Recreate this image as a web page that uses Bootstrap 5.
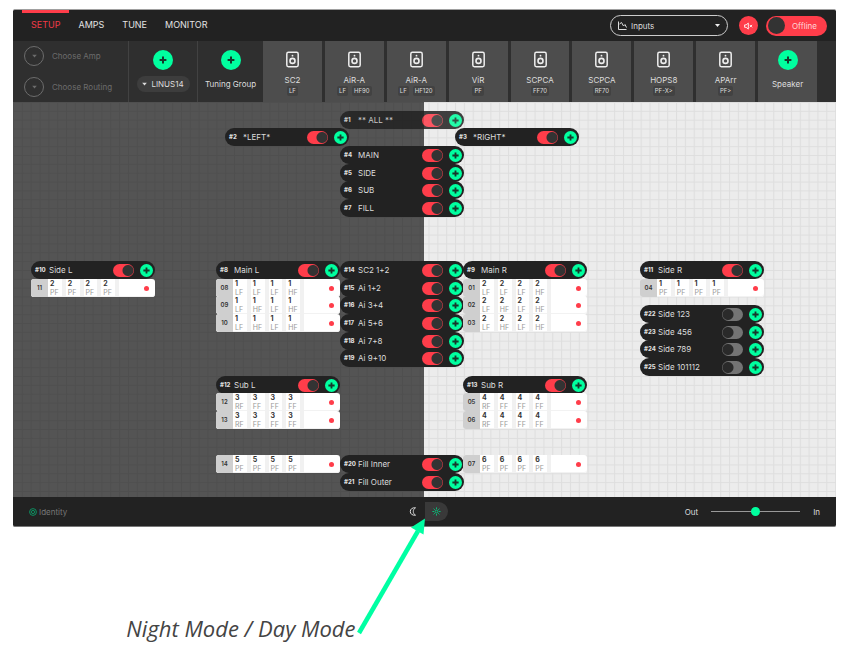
<!DOCTYPE html>
<html lang="en">
<head>
<meta charset="utf-8">
<meta name="viewport" content="width=device-width, initial-scale=1">
<title>Setup</title>
<link rel="stylesheet" href="https://cdn.jsdelivr.net/npm/bootstrap@5.3.0/dist/css/bootstrap.min.css">
<style>
  :root { --ink:#222; --panel:#2f2f2f; --tile:#4d4d4d; --red:#ff3d4a; --green:#00ff9f; }
  body { font-family: Inter, "Liberation Sans", sans-serif; font-size: 8px; line-height: 12px; background: #fff; color: #ddd; }
  button { font: inherit; color: inherit; border: 0; padding: 0; background: none; }
  .page { padding: 9px 23px 0 13px; }
  .app { background: var(--ink); border-top: 1px solid #a0a0a0; border-bottom: 1px solid #777; border-radius: 2px; }

  .topbar { height: 31px; padding-left: 9px; padding-right: 9px; }
  .tabs a { font-size: 9px; color: #e2e2e2; padding: 0 9px; border-top: 3px solid transparent; line-height: 24px; }
  .tabs a.active { color: #ef3a47; border-color: var(--red); }
  .source { width: 118px; height: 21px; margin-right: 11px; }
  .source select { font-size: 8px; line-height: 12px; color: #ddd; background: transparent; border: 1px solid #ccc; border-radius: 11px; padding: 0 20px; height: 21px; appearance: none; }
  .source svg { position: absolute; pointer-events: none; top: 0; left: 0; }
  .mute { width: 19px; height: 19px; background: var(--red); margin-right: 8px; }
  .offline { width: 61px; height: 20px; background: var(--red); color: #ffd5d8; padding-left: 2px; gap: 7px; }
  .offline input { appearance: none; width: 17px; height: 17px; border-radius: 50%; background: #333; margin: 0; }

  .library { height: 61px; background: var(--panel); }
  .choosers { width: 116px; padding-left: 11px; color: #6c6c6c; gap: 11px; border-right: 1px solid #424242; }
  .ring { width: 20px; height: 20px; border: 1px solid #6c6c6c; }
  .maker { border-right: 1px solid #424242; padding-top: 9px; }
  .maker.amp { width: 69px; }
  .maker.group { width: 65px; border: 0; }
  .add { width: 20px; height: 20px; background: var(--green); }
  .pill { height: 16px; width: 53px; background: #3d3d3d; border-radius: 8px; gap: 4px; margin-top: 6px; }
  .tiles { gap: 3px; padding-right: 19px; }
  .tile { background: var(--tile); flex: 1 1 0; min-width: 0; }
  .tile.new { padding-top: 9px; }
  .tile .glyph { margin-top: 10px; }
  .tile .title { line-height: 12px; margin-top: 6px; }
  .tag { font-size: 6px; line-height: 10px; background: #424242; border-radius: 2px; padding: 0 2px; }

  .stage { height: 395px; background: linear-gradient(90deg, #545454 50%, #ececec 50%); overflow: hidden; }
  .node { position: absolute; width: 124px; height: 18px; }
  .group-node { background: var(--ink); border-radius: 9px; padding-left: 4px; padding-right: 2px; }
  .group-node.faded { opacity: .85; }
  .num { font-size: 6px; font-weight: 800; width: 14px; }
  .knob { appearance: none; width: 21px; height: 13px; margin: 0 6px 0 0; border-radius: 7px; border: 0;
    background: radial-gradient(circle at 6px 50%, #2a2a2a 5px, #747474 6px); }
  .knob:checked { background: radial-gradient(circle at 15px 50%, #333 5px, var(--red) 6px); }
  .plus { width: 13px; height: 13px; background: var(--green); }
  .unit-node { background: #fff; border-radius: 3px; color: #333; overflow: hidden; box-shadow: inset 0 -1px #f2f2f2; }
  .unit-id { width: 17px; background: #cfcfcf; font-size: 6px; font-weight: 600; }
  .slots { width: 71px; }
  .slot { flex: 1 1 0; border-right: 4px solid #f1f1f1; padding-left: 2px; line-height: 9px; white-space: nowrap; }
  .slot b { font-size: 7px; font-weight: 700; }
  .slot span { font-size: 7px; color: #999; }
  .status { width: 5px; height: 5px; background: var(--red); margin-right: 6px; }

  .bottombar { height: 29px; display: grid; grid-template-columns: 1fr auto 1fr; align-items: center; padding: 0 16px; }
  .identity { color: #777; gap: 2px; }
  .mode { width: 23px; height: 19px; }
  .mode.day { background: #393939; border-radius: 0 10px 10px 0; }
  .zoom { gap: 13px; }
  .zoom input { appearance: none; width: 89px; height: 10px; margin: 0; background: linear-gradient(#999, #999) center / 100% 1px no-repeat; }
  .zoom input::-webkit-slider-thumb { appearance: none; width: 9px; height: 9px; border-radius: 50%; background: var(--green); }

  .callout { height: 120px; }
  .callout p { width: 50%; font: italic 22px/30px "Open Sans", sans-serif; color: #444; padding: 86px 69px 0 0; white-space: nowrap; }
  .callout svg { position: absolute; left: 50%; top: -11px; margin-left: -70px; pointer-events: none; }
</style>
<script src="https://cdn.jsdelivr.net/npm/bootstrap@5.3.0/dist/js/bootstrap.bundle.min.js"></script>
</head>
<body>
<svg width="0" height="0" class="position-absolute" aria-hidden="true">
  <symbol id="i-plus" viewBox="0 0 12 12"><path d="M6 2.600v6.800M2.600 6h6.800" stroke="#16372b" stroke-width="2" fill="none"/></symbol>
  <symbol id="i-caret" viewBox="0 0 6 4"><path d="M.2.500h5.600L3 3.700z" fill="currentColor"/></symbol>
  <symbol id="i-speaker" viewBox="0 0 13 16"><rect x=".8" y=".8" width="11.400" height="14.400" rx="1.600" fill="none" stroke="#eee" stroke-width="1.500"/><circle cx="6.500" cy="9.400" r="2.500" fill="none" stroke="#eee" stroke-width="1.600"/><circle cx="6.500" cy="4.200" r=".9" fill="#eee"/></symbol>
</svg>
<div class="page">
  <main class="app">
    <header class="topbar d-flex align-items-center">
      <nav class="tabs d-flex align-self-start me-auto">
        <a class="active text-decoration-none" href="#">SETUP</a><a class="text-decoration-none" href="#">AMPS</a><a class="text-decoration-none" href="#">TUNE</a><a class="text-decoration-none" href="#">MONITOR</a>
      </nav>
      <div class="source position-relative">
        <select class="w-100 d-block" aria-label="Source"><option>Inputs</option></select>
        <svg width="118" height="21" viewBox="0 0 118 21"><path d="M8.500 6.500v8h8M9.500 9l2-1.500 2 3.500 1.500-1.500 1.500 3" fill="none" stroke="#ddd"/><path d="M105 9h5l-2.500 3z" fill="#eee"/></svg>
      </div>
      <button class="mute rounded-circle d-flex align-items-center justify-content-center" type="button" aria-label="Mute">
        <svg width="9" height="8" viewBox="0 0 9 7"><path d="M.6 2.400h1.500L4.300.6v6L2.100 4.800H.6zM5.700 2.400l2.400 2.400M8.100 2.400L5.700 4.800" fill="none" stroke="#fff" stroke-width=".9"/></svg>
      </button>
      <label class="offline rounded-pill d-flex align-items-center"><input type="checkbox">Offline</label>
    </header>

    <section class="library d-flex">
      <div class="choosers d-flex flex-column justify-content-center flex-shrink-0">
        <button class="d-flex align-items-center gap-2" type="button"><i class="ring rounded-circle d-flex align-items-center justify-content-center"><svg width="5" height="4"><use href="#i-caret"/></svg></i>Choose Amp</button>
        <button class="d-flex align-items-center gap-2" type="button"><i class="ring rounded-circle d-flex align-items-center justify-content-center"><svg width="5" height="4"><use href="#i-caret"/></svg></i>Choose Routing</button>
      </div>
      <div class="maker amp d-flex flex-column align-items-center flex-shrink-0">
        <button class="add rounded-circle d-flex align-items-center justify-content-center" type="button" aria-label="Add amp"><svg width="12" height="12"><use href="#i-plus"/></svg></button>
        <button class="pill d-flex align-items-center justify-content-center" type="button"><svg width="5" height="4"><use href="#i-caret"/></svg>LINUS14</button>
      </div>
      <div class="maker group d-flex flex-column align-items-center flex-shrink-0">
        <button class="add rounded-circle d-flex align-items-center justify-content-center" type="button" aria-label="Add tuning group"><svg width="12" height="12"><use href="#i-plus"/></svg></button>
        <span class="text-nowrap pt-2">Tuning Group</span>
      </div>
      <div class="tiles d-flex flex-grow-1" id="tiles"></div>
    </section>

    <section class="stage position-relative" id="stage">
      <svg class="d-block w-100 h-100" aria-hidden="true">
        <defs><pattern id="grid" width="8.84" height="8.84" patternUnits="userSpaceOnUse"><path d="M.5 0v8.84M0 .5h8.84" stroke="#000" stroke-opacity=".06" fill="none"/></pattern></defs>
        <rect width="100%" height="100%" fill="url(#grid)"/>
      </svg>
    </section>

    <footer class="bottombar">
      <div class="identity d-flex align-items-center">
        <svg width="8" height="8" viewBox="0 0 8 8" fill="none" stroke="#0b9a66" stroke-width=".9"><circle cx="4" cy="4" r="3.400"/><circle cx="4" cy="4" r="1.600"/></svg>Identity
      </div>
      <div class="d-flex">
        <button class="mode d-flex align-items-center justify-content-center" type="button" aria-label="Night mode"><svg width="8" height="9" viewBox="0 0 8 9"><path d="M6.500.8C3.200.4 1.300 2.200 1.300 4.500s1.900 4.100 5.200 3.700C4.900 7.200 4.300 6 4.300 4.500S4.900 1.800 6.500.8z" fill="none" stroke="#ddd"/></svg></button>
        <button class="mode day d-flex align-items-center justify-content-center" type="button" aria-label="Day mode"><svg width="9" height="9" viewBox="0 0 9 9" stroke="#00d987" stroke-width=".8" fill="none"><circle cx="4.500" cy="4.500" r="1.400"/><path d="M4.500.4v1.700M4.500 6.900v1.700M.4 4.500h1.700M6.900 4.500h1.700M1.600 1.600l1.200 1.200M6.200 6.200l1.200 1.200M1.600 7.400l1.200-1.200M6.200 2.800l1.200-1.200"/></svg></button>
      </div>
      <label class="zoom d-flex align-items-center justify-content-end">Out<input type="range" value="50">In</label>
    </footer>
  </main>

  <div class="callout position-relative">
    <p class="text-end mb-0">Night Mode / Day Mode</p>
    <svg width="72" height="120" viewBox="0 0 72 120"><path d="M4 117L63 15" stroke="#00ffa3" stroke-width="4.500"/><path d="M70 2.500L68.500 18.500 56 11.500z" fill="#00ffa3"/></svg>
  </div>
</div>

<script>
const plus = '<svg width="11" height="11"><use href="#i-plus"/></svg>';
const speakers = [['SC2','LF'],['AiR-A','LF','HF90'],['AiR-A','LF','HF120'],['ViR','PF'],['SCPCA','FF70'],['SCPCA','RF70'],['HOPS8','PF-X&gt;'],['APArr','PF&gt;']];
document.getElementById('tiles').innerHTML = speakers.map(([name, ...tags]) =>
  `<div class="tile d-flex flex-column align-items-center"><svg class="glyph" width="13" height="17"><use href="#i-speaker"/></svg><span class="title">${name}</span><div class="d-flex gap-1">${tags.map(t => `<span class="tag">${t}</span>`).join('')}</div></div>`).join('') +
  `<div class="tile new d-flex flex-column align-items-center"><button class="add rounded-circle d-flex align-items-center justify-content-center" type="button" aria-label="Add speaker"><svg width="12" height="12"><use href="#i-plus"/></svg></button><span class="pt-2">Speaker</span></div>`;

// Nodes sit on the stage grid: [column, row, number, label, on]
const STEP = 8.83;
const groups = [
  [37,1,1,'** ALL **',1],[24,3,2,'*LEFT*',1],[50,3,3,'*RIGHT*',1],[37,5,4,'MAIN',1],[37,7,5,'SIDE',1],[37,9,6,'SUB',1],[37,11,7,'FILL',1],
  [2,18,10,'Side L',1],[23,18,8,'Main L',1],[37,18,14,'SC2 1+2',1],[51,18,9,'Main R',1],[71,18,11,'Side R',1],
  [37,20,15,'Ai 1+2',1],[37,22,16,'Ai 3+4',1],[37,24,17,'Ai 5+6',1],[37,26,18,'Ai 7+8',1],[37,28,19,'Ai 9+10',1],
  [71,23,22,'Side 123',0],[71,25,23,'Side 456',0],[71,27,24,'Side 789',0],[71,29,25,'Side 101112',0],
  [23,31,12,'Sub L',1],[51,31,13,'Sub R',1],[37,40,20,'Fill Inner',1],[37,42,21,'Fill Outer',1]];
const units = [
  [2,20,'11',2,'PF PF PF PF'],[23,20,'08',1,'LF LF LF HF'],[23,22,'09',1,'LF HF LF HF'],[23,24,'10',1,'LF HF LF HF'],
  [51,20,'01',2,'LF LF LF HF'],[51,22,'02',2,'LF HF LF HF'],[51,24,'03',2,'LF HF LF HF'],[71,20,'04',1,'PF PF PF PF'],
  [23,33,'12',3,'RF FF FF FF'],[23,35,'13',3,'RF FF FF FF'],[51,33,'05',4,'RF FF FF FF'],[51,35,'06',4,'RF FF FF FF'],
  [23,40,'14',5,'PF PF PF PF'],[51,40,'07',6,'PF PF PF PF']];
const at = (c, r) => `left:${Math.round(c * STEP)}px;top:${Math.round(r * STEP)}px`;
document.getElementById('stage').insertAdjacentHTML('beforeend',
  groups.map(([c, r, n, label, on]) =>
    `<div class="node group-node d-flex align-items-center ${n === 1 ? 'faded' : ''}" style="${at(c, r)}"><span class="num">#${n}</span><label class="flex-grow-1 text-nowrap" for="g${n}">${label}</label><input class="knob" type="checkbox" id="g${n}" ${on ? 'checked' : ''}><button class="plus rounded-circle d-flex align-items-center justify-content-center" type="button" aria-label="Add to ${label}">${plus}</button></div>`).join('') +
  units.map(([c, r, id, n, types]) =>
    `<div class="node unit-node d-flex" style="${at(c, r)}"><span class="unit-id d-flex align-items-center justify-content-center">${id}</span><div class="slots d-flex">${types.split(' ').map(t => `<div class="slot d-flex flex-column"><b>${n}</b><span>${t}</span></div>`).join('')}</div><i class="status rounded-circle ms-auto align-self-center"></i></div>`).join(''));
</script>
</body>
</html>
